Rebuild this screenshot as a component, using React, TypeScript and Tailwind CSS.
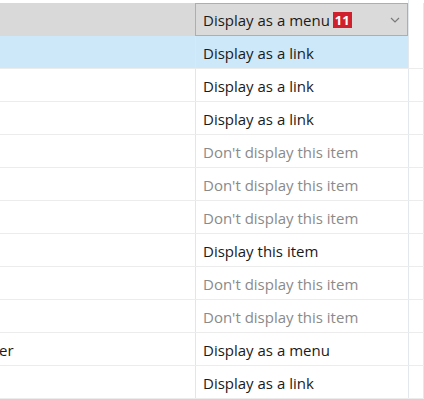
const rows: { label: string; left?: string; dim?: boolean; selected?: boolean }[] = [
  { label: 'Display as a link', selected: true },
  { label: 'Display as a link' },
  { label: 'Display as a link' },
  { label: "Don't display this item", dim: true },
  { label: "Don't display this item", dim: true },
  { label: "Don't display this item", dim: true },
  { label: 'Display this item' },
  { label: "Don't display this item", dim: true },
  { label: "Don't display this item", dim: true },
  { label: 'Display as a menu', left: 'er' },
  { label: 'Display as a link' },
];

export default function App() {
  return (
    <div
      className="w-[424px] h-[399px] overflow-hidden bg-white text-[15px] text-[#1a1a1a]"
      style={{ fontFamily: '"Open Sans", "Noto Sans", sans-serif' }}
    >
      <div className="h-[3px] flex">
        <div className="w-[408px]" />
        <div className="w-[1px] bg-[#e3e8ef]" />
      </div>

      {/* Header row with open dropdown */}
      <div className="flex h-[33px]">
        <div className="w-[195px] bg-[#d9d9d9]" />
        <div className="w-[213px] flex items-center bg-[#dadada] border border-[#aeaeae] pl-[7px] pr-[7px] pt-[1px]">
          <span>Display as a menu</span>
          <span className="ml-[3px] h-[16px] px-[2px] bg-[#d0202e] text-white text-[13px] font-bold leading-[16px] flex items-center">
            11
          </span>
          <svg className="ml-auto" width="10" height="6" viewBox="0 0 10 6" fill="none" stroke="#7a7a7a" strokeWidth="1.2">
            <path d="M1 1l4 4 4-4" />
          </svg>
        </div>
        <div className="w-[1px] bg-[#e3e8ef]" />
        <div className="w-[14px]" />
        <div className="w-[1px] bg-[#e3e8ef]" />
      </div>

      {rows.map((r, i) => (
        <div key={i} className="flex h-[33px] border-b border-[#ececec]">
          <div className={`w-[195px] flex items-center pt-[2px] ${r.selected ? 'bg-[#cde8f8]' : ''}`}>
            {r.left && <span className="ml-[-1px]">{r.left}</span>}
          </div>
          <div className="w-[1px] bg-[#dfe6ef]" />
          <div
            className={`w-[212px] flex items-center pl-[7px] pt-[2px] ${r.selected ? 'bg-[#cde8f8]' : ''} ${
              r.dim ? 'text-[#8a8a8a]' : ''
            }`}
          >
            {r.label}
          </div>
          <div className="w-[1px] bg-[#e3e8ef]" />
          <div className="w-[14px]" />
          <div className="w-[1px] bg-[#e3e8ef]" />
        </div>
      ))}
    </div>
  );
}
